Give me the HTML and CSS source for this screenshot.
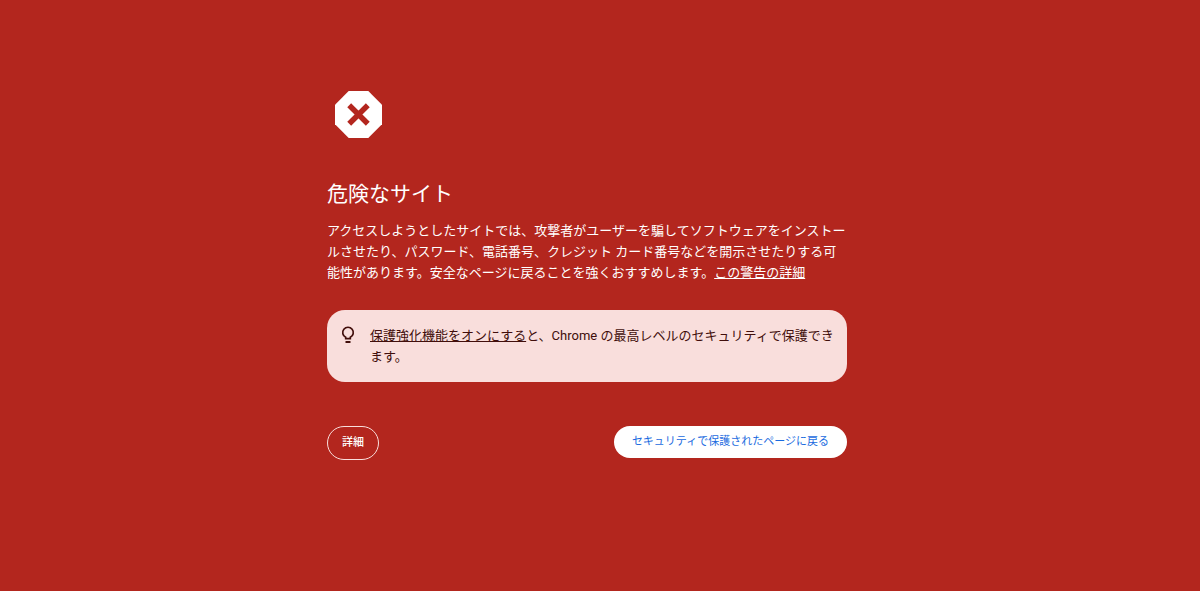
FILE: index.html
```
<!DOCTYPE html>
<html lang="ja">
<head>
  <meta charset="UTF-8">
  <meta name="viewport" content="width=device-width, initial-scale=1.0">
  <title>セキュリティ エラー</title>
  <link rel="stylesheet" href="styles.css">
</head>
<body>
  <main class="interstitial">
    <svg class="icon" viewBox="0 0 48 48" aria-hidden="true">
      <path fill="#fff" d="M14 0h20l14 14v20L34 48H14L0 34V14z"/>
      <path stroke="#b3261e" stroke-width="5.6" d="M14.5 14.5l19 19M33.5 14.5l-19 19"/>
    </svg>

    <h1>危険なサイト</h1>
    <p class="message">アクセスしようとしたサイトでは、攻撃者がユーザーを騙してソフトウェアをインストールさせたり、パスワード、電話番号、クレジット カード番号などを開示させたりする可能性があります。安全なページに戻ることを強くおすすめします。<a href="#">この警告の詳細</a></p>

    <div class="promo">
      <svg class="bulb" viewBox="0 0 14 18" aria-hidden="true">
        <path fill="none" stroke="#410e0b" stroke-width="1.7" d="M4.7 12.7v-1.4a5.3 5.3 0 1 1 4.6 0v1.4z"/>
        <path fill="#410e0b" d="M4.500 15h5v2h-5z"/>
      </svg>
      <p><a href="#">保護強化機能をオンにする</a>と、Chrome の最高レベルのセキュリティで保護できます。</p>
    </div>

    <div class="buttons">
      <button class="details" type="button">詳細</button>
      <button class="primary" type="button">セキュリティで保護されたページに戻る</button>
    </div>
  </main>
</body>
</html>
```

FILE: styles.css
```
body {
  margin: 0;
  padding: 91px 26px 0 0;
  background: #b3261e;
  color: #fff;
  font-family: Roboto, "Noto Sans CJK JP", sans-serif;
  font-size: 13px;
  line-height: 21px;
}
.interstitial {
  max-width: 520px;
  margin: 0 auto;
}
.icon {
  display: block;
  width: 47px;
  height: 47px;
  margin: 0 0 41px 8px;
}
h1 {
  margin: 0 0 11px;
  font-size: 21px;
  font-weight: 400;
  line-height: 30px;
}
p {
  margin: 0;
}
a {
  color: inherit;
}
.promo {
  display: flex;
  gap: 15px;
  margin-top: 27px;
  padding: 15px 8px 15px 14px;
  border-radius: 18px;
  background: #f9dedc;
  color: #410e0b;
}
.bulb {
  flex: none;
  width: 14px;
  height: 18px;
  margin-top: 1px;
}
.buttons {
  display: flex;
  justify-content: space-between;
  align-items: flex-start;
  margin-top: 44px;
}
button {
  box-sizing: border-box;
  border: 0;
  border-radius: 17px;
  font-family: inherit;
  font-size: 11px;
  font-weight: 500;
  line-height: 16px;
  cursor: pointer;
}
.details {
  padding: 8px 14px;
  border: 1px solid #f9dedc;
  background: transparent;
  color: #fff;
}
.primary {
  padding: 8px 18px;
  background: #fff;
  color: #1a6be0;
  font-weight: 400;
}
```
